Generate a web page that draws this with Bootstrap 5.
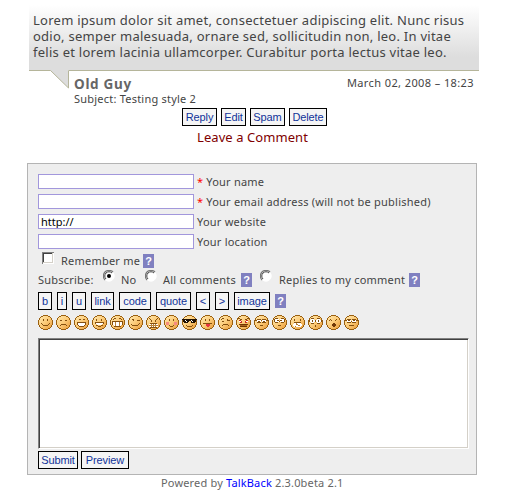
<!DOCTYPE html>
<html lang="en">
<head>
<meta charset="utf-8">
<title>Comments</title>
<link href="https://cdn.jsdelivr.net/npm/bootstrap@5.3.0/dist/css/bootstrap.min.css" rel="stylesheet">
<style>
body{font:11px/14px "Noto Sans","Open Sans",sans-serif;letter-spacing:.22px;color:#444;background:#fff;width:513px;height:500px;overflow:hidden}
.bubble{width:450px;height:66px;margin:5px 0 0 29px;padding:7px 0 0 4px;border-bottom:1px solid #b5b59a;background:linear-gradient(#fff,#ddd 80%);font-size:13px;line-height:16px;white-space:nowrap;letter-spacing:.255px}
.tail{width:20px;height:19px;margin:-1px 0 0 49px;display:block}
.author{font-size:13.5px;font-weight:700;line-height:16px;color:#666;letter-spacing:.7px}
.date{letter-spacing:.4px}
.meta{margin-left:5px;width:400px;padding-top:5px}
.tb-btn{font:11px/16px "Liberation Sans",Arial,sans-serif;letter-spacing:-.1px;height:18px;padding:0;border:1px solid #000;background:#f5f5f5;color:#139;border-radius:0;white-space:nowrap;text-align:center;flex:none}
.b10{width:10px}.b14{width:14px}.b23{width:23px}.b25{width:25px}.b32{width:32px}.b35{width:35px}.b36{width:36px}.b38{width:38px}.b40{width:40px}.b48{width:48px}
.actions{margin:2px 0 0 182px;gap:4px}
.leave{font-size:13px;line-height:16px;color:#800000;margin:3px 0 0 197px;white-space:nowrap;letter-spacing:.07px}
.panel{margin:18px 0 0 27px;width:450px;height:312px;border:1px solid #b4b4b4;background:#eee;padding:10px 0 0 10px;white-space:nowrap}
.field{height:20px}
.field input{width:156px;height:15px;border:1px solid #a297dc;border-radius:0;background:#fff;padding:0 2px;font:11px/13px "Noto Sans",sans-serif;color:#000;outline:0;margin-right:3px}
.field span{line-height:15px}
.req{color:#f00;margin-right:3px}
.help{width:11px;height:14px;background:#8080c0;color:#fff;font:700 11px/14px "Liberation Sans",sans-serif;letter-spacing:0;text-align:center;flex:none}
.tick{flex:none;display:block}
.box{margin-top:-2px}
.remember{height:18px;width:116px;padding-left:4px}
.remember .label{margin-left:7px}
.subscribe{height:22px;margin-top:-2px}
.subscribe span{margin-top:3px;flex:none}
.subscribe .w-sub{width:65px}
.subscribe .w-no{width:30px;padding-left:6px}
.subscribe .w-all{width:84px;padding-left:6px}
.subscribe .w-rep{width:137px;padding-left:7px}
.r3{margin-left:8px}
.tools{gap:5px;height:18px}
.smileys{gap:3px;margin-top:5px;height:15px}
.smileys svg{width:15px;height:15px;flex:none;fill:none;stroke:#85500f;shape-rendering:crispEdges}
.message{display:block;width:431px;height:111px;margin-top:8px;resize:none;border:1px solid;border-color:#808080 #fff #fff #808080;box-shadow:inset 1px 1px #404040,inset -1px -1px #d4d0c8;border-radius:0;background:#fff;outline:0}
.submits{gap:3px;margin-top:2px}
.foot{margin:0 0 0 161px;color:#666;line-height:15px;white-space:nowrap;letter-spacing:.17px}
.foot a{color:#00f;text-decoration:none}
</style>
<script src="https://cdn.jsdelivr.net/npm/bootstrap@5.3.0/dist/js/bootstrap.bundle.min.js"></script>
</head>
<body>
<svg width="0" height="0" class="position-absolute">
<defs>
<linearGradient id="skin" x1="0" y1="0" x2="1" y2="1"><stop offset="0" stop-color="#ffe9b0"/><stop offset=".5" stop-color="#fccb78"/><stop offset="1" stop-color="#e89a38"/></linearGradient>
<symbol id="face" viewBox="0 0 15 15"><path stroke="none" fill="#9a6010" d="M5 0h5v1h2v1h1v1h1v2h1v5h-1v2h-1v1h-1v1h-2v1H5v-1H3v-1H2v-1H1v-2H0V5h1V3h1V2h1V1h2z"/><path stroke="none" fill="url(#skin)" d="M5 1h5v1h2v1h1v2h1v5h-1v2h-1v1h-2v1H5v-1H3v-1H2v-2H1V5h1V3h1V2h2z"/></symbol>
<symbol id="radio" viewBox="0 0 12 12"><circle cx="6" cy="6" r="5.2" fill="#fff" stroke="#fff"/><path d="M2 10A5.3 5.3 0 0 1 10 2" fill="none" stroke="#777" stroke-width="1.2"/><path d="M3 9A4.2 4.2 0 0 1 9 3" fill="none" stroke="#404040"/></symbol>
</defs>
</svg>
<main>
<div class="bubble">
<div>Lorem ipsum dolor sit amet, consectetuer adipiscing elit. Nunc risus</div>
<div>odio, semper malesuada, ornare sed, sollicitudin non, leo. In vitae</div>
<div>felis et lorem lacinia ullamcorper. Curabitur porta lectus vitae leo.</div>
</div>
<div class="d-flex">
<svg class="tail flex-shrink-0" viewBox="0 0 20 19"><path d="M1 0L19.5 18V0z" fill="#ddd"/><path d="M1.500 .5L19.500 18V1" fill="none" stroke="#b5b59a"/></svg>
<div class="meta">
<div class="d-flex justify-content-between"><span class="author">Old Guy</span><span class="date">March 02, 2008 – 18:23</span></div>
<div class="subject">Subject: Testing style 2</div>
</div>
</div>
<div class="actions d-flex"><button class="tb-btn b35">Reply</button><button class="tb-btn b25">Edit</button><button class="tb-btn b35">Spam</button><button class="tb-btn b38">Delete</button></div>
<div class="leave">Leave a Comment</div>
<form class="panel">
<div class="field d-flex"><input type="text"><span class="req">*</span><span>Your name</span></div>
<div class="field d-flex"><input type="text"><span class="req">*</span><span>Your email address (will not be published)</span></div>
<div class="field d-flex"><input type="text" value="http://"><span>Your website</span></div>
<div class="field d-flex"><input type="text"><span>Your location</span></div>
<div class="remember d-flex">
<svg class="tick box" width="12" height="12" shape-rendering="crispEdges"><path fill="#fff" d="M0 0h12v12H0z"/><path fill="none" stroke="#808080" d="M.5 12V.5H12"/><path fill="none" stroke="#404040" d="M1.500 11V1.500H11"/><path fill="none" stroke="#d4d0c8" d="M1 10.500h9.500V1"/></svg>
<span class="label flex-grow-1">Remember me</span><span class="help">?</span></div>
<div class="subscribe d-flex">
<span class="w-sub">Subscribe:</span>
<svg class="tick" width="12" height="12"><use href="#radio"/><circle cx="6" cy="6" r="2" fill="#000"/></svg><span class="w-no">No</span>
<svg class="tick" width="12" height="12"><use href="#radio"/></svg><span class="w-all">All comments</span><span class="help">?</span>
<svg class="tick r3" width="12" height="12"><use href="#radio"/></svg><span class="w-rep">Replies to my comment</span><span class="help">?</span>
</div>
<div class="tools d-flex"><button type="button" class="tb-btn b14">b</button><button type="button" class="tb-btn b10">i</button><button type="button" class="tb-btn b14">u</button><button type="button" class="tb-btn b23">link</button><button type="button" class="tb-btn b32">code</button><button type="button" class="tb-btn b35">quote</button><button type="button" class="tb-btn b14">&lt;</button><button type="button" class="tb-btn b14">&gt;</button><button type="button" class="tb-btn b36">image</button><span class="help align-self-center">?</span></div>
<div class="smileys d-flex">
<svg><use href="#face"/><path d="M5.500 4v2M9.500 4v2M3 8.500h1M4 9.500h1M5 10.500h5M10 9.500h1M11 8.500h1"/></svg>
<svg><use href="#face"/><path d="M4 5.500h2M9 5.500h2M5 9.500h5M4 10.500h1M10 10.500h1"/></svg>
<svg><use href="#face"/><path d="M5 4.500h2M9 4.500h2M3 7.500h9M3.500 8v2M11.500 8v2M4 10.500h1M10 10.500h1M5 11.500h5"/><path stroke="none" fill="#fff" d="M4 8h7v2h-1v1H5v-1H4z"/></svg>
<svg><use href="#face"/><path d="M4.500 4v2M9.500 4v2M3 7.500h9M3.500 8v1M11.500 8v1M4 10.500h2M9 10.500h2M6 11.500h3"/><path stroke="none" fill="#fff" d="M4 8h7v1h-1v1H5V9H4z"/></svg>
<svg><use href="#face"/><path d="M3 4.500h1M4 3.500h2M9 3.500h2M11 4.500h1M2 6.500h11M2.500 7v3M12.500 7v3M4 11.500h7"/><path stroke="none" fill="#fff" d="M3 7h9v3h-1v1H4v-1H3z"/><path d="M5.500 7v4M9.500 7v4" stroke="#b98135"/></svg>
<svg><use href="#face"/><path d="M4 4.500h2M5 5.500h1M9 5.500h3M3 9.500h1M4 10.500h6M10 9.500h1M11 8.500h1"/></svg>
<svg><use href="#face"/><path d="M3 3.500h1M4 4.500h1M5 5.500h1M11 3.500h1M10 4.500h1M9 5.500h1M5 6.500h1M9 6.500h1M4 8.500h7M4 12.500h7"/><path stroke="none" fill="#fff" d="M3 9h9v3H3z"/><path d="M3 10.500h9M5.500 9v3M7.500 9v3M9.500 9v3" stroke="#b98135"/></svg>
<svg><use href="#face"/><path stroke="none" fill="#f58a80" d="M2 7h3v3H2zM10 7h3v3h-3z"/><path d="M5.500 4v2M9.500 4v2M5 10.500h1M6 11.500h3M9 10.500h1"/></svg>
<svg><use href="#face"/><path d="M4 10.500h1M5 11.500h5M10 10.500h1"/><path stroke="none" fill="#201000" d="M0 4h15v1h-1v2h-1v1H9V6H7v1H6v1H2V7H1V5H0z"/><path stroke="#fff" d="M3 5.500h1M4 6.500h1M9 5.500h1M10 6.500h1"/></svg>
<svg><use href="#face"/><path d="M5.500 4v2M9.500 4v2M3 8.500h9"/><path stroke="none" fill="#e73540" d="M6 9h4v2H9v1H7v-1H6z"/></svg>
<svg><use href="#face"/><path d="M3 4.500h1M4 3.500h2M9 5.500h3M4 6.500h2M5 9.500h5M4 10.500h1M10 10.500h1M9 4.500h1"/></svg>
<svg><use href="#face"/><path d="M2 3.500h2M4 4.500h2M9 4.500h2M11 3.500h2"/><path stroke="#fff" d="M3 6.500h3M9 6.500h3"/><path stroke="#c72c22" d="M3 5.500h2M5 6.500h1M9 6.500h1M10 5.500h2M4 7.500h2M9 7.500h2"/><path stroke="none" fill="#713600" d="M3 9h9v1h-1v2H4v-2H3z"/><path stroke="#a86420" d="M4 10.500h7"/></svg>
<svg><use href="#face"/><path stroke="none" fill="#fff" d="M3 5h4v2H3zM8 5h4v2H8z"/><path d="M3 4.500h4M8 4.500h4M1 5.500h2M12 5.500h2M3 7.500h4M8 7.500h4M4 6.500h2M9 6.500h2M7 5.500h1M6 10.500h3"/></svg>
<svg><use href="#face"/><path stroke="none" fill="#fff" d="M3 4h4v3H3zM8 4h4v3H8z"/><path d="M3 3.500h3M9 3.500h3M2.500 4v3M12.500 4v3M3 7.500h3M9 7.500h3M5 5.500h2M8 5.500h2M7 6.500h1M6 10.500h3"/></svg>
<svg><use href="#face"/><path d="M4.500 4v2M10.500 4v2M4 7.500h7"/><path stroke="none" fill="#fff" d="M4 8h7v1h1v2h-1v1H4v-1H3V9h1z"/><path stroke="#b98135" d="M6 9.500h2M8 10.500h2M5 11.500h1M6 8.500h1"/></svg>
<svg><use href="#face"/><path stroke="none" fill="#fff" d="M3 4h3v1h1v2H6v1H3V7H2V5h1zM9 4h3v1h1v2h-1v1H9V7H8V5h1z"/><path d="M3 3.500h3M9 3.500h3M1.500 5v2M7.500 5v2M13.500 5v2M3 8.500h3M9 8.500h3M4.500 5v2M10.500 5v2M7.500 10v2"/></svg>
<svg><use href="#face"/><path d="M4 4.500h1M5 5.500h1M9 5.500h1M10 4.500h1M3 5.500h1"/><path stroke="none" fill="#703808" d="M7 8h2v1h1v2H9v1H7v-1H6V9h1z"/></svg>
<svg><use href="#face"/><path stroke="none" fill="#fff" d="M3 5h4v3H3zM8 5h4v3H8z"/><path d="M3 4.500h4M8 4.500h4M1 5.500h2M12 5.500h2M3 7.500h4M8 7.500h4M4 5.500h2M9 5.500h2M7 6.500h1M5 10.500h5"/></svg>
</div>
<textarea class="message"></textarea>
<div class="submits d-flex"><button type="button" class="tb-btn b40">Submit</button><button type="button" class="tb-btn b48">Preview</button></div>
</form>
<div class="foot">Powered by <a href="#">TalkBack</a> 2.3.0beta 2.1</div>
</main>
</body>
</html>
